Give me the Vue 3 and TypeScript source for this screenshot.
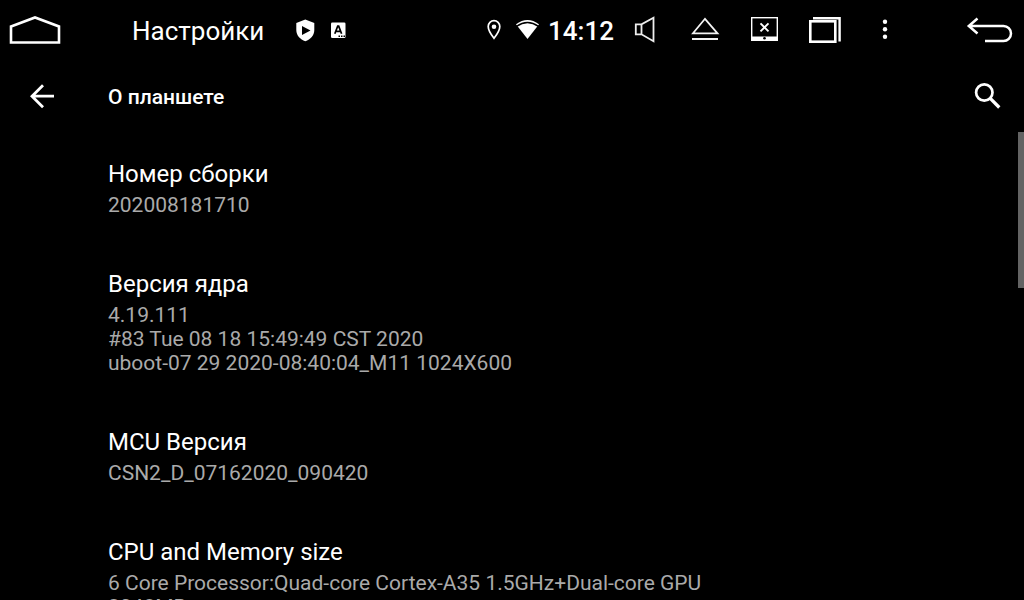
<script setup lang="ts">
interface Entry {
  title: string
  lines: string[]
}

const entries: Entry[] = [
  { title: 'Номер сборки', lines: ['202008181710'] },
  {
    title: 'Версия ядра',
    lines: ['4.19.111', '#83 Tue 08 18 15:49:49 CST 2020', 'uboot-07 29 2020-08:40:04_M11 1024X600'],
  },
  { title: 'MCU Версия', lines: ['CSN2_D_07162020_090420'] },
  {
    title: 'CPU and Memory size',
    lines: ['6 Core Processor:Quad-core Cortex-A35 1.5GHz+Dual-core GPU', '2048MB'],
  },
]
</script>

<template>
  <div class="screen">
    <header class="status">
      <button class="key" type="button" aria-label="Домой">
        <svg width="70" height="60" viewBox="0 0 70 60">
          <path d="M11 26.5 35 17.5 59 26.5V42.5H11Z" fill="none" stroke="#fff" stroke-width="2.6" />
        </svg>
      </button>
      <span class="app-name">Настройки</span>
      <span class="notices">
        <svg width="20" height="60" viewBox="295 0 20 60">
          <path d="M305.300 19.500 314.300 23V30C314.300 35.500 310.500 39.500 305.300 41.200 300.100 39.500 296.300 35.500 296.300 30V23Z" fill="#fff" />
          <path d="M302 26 310.500 30.500 302 35Z" fill="#000" />
        </svg>
        <svg width="18" height="60" viewBox="329 0 18 60">
          <rect x="331" y="22.500" width="14.500" height="15.500" rx="1.300" fill="#fff" />
          <path d="M334.800 33.800 337.700 26.200H338.700L341.600 33.800M336 31.300H340.400" fill="none" stroke="#000" stroke-width="1.700" />
          <path d="M338.500 36.200H345" stroke="#000" stroke-width="1.500" stroke-dasharray="1.500 1" />
        </svg>
      </span>
      <span class="indicators">
        <svg width="24" height="60" viewBox="482 0 24 60">
          <path d="M494 38.300C491 34.500 488.200 30.500 488.200 26.500A5.800 5.900 0 0 1 499.800 26.500C499.800 30.500 497 34.500 494 38.300Z" fill="none" stroke="#fff" stroke-width="1.700" />
          <circle cx="494" cy="26.700" r="2.300" fill="#fff" />
        </svg>
        <svg width="30" height="60" viewBox="512 0 30 60">
          <path d="M516 24.300Q527.500 15.700 539 24.300L527.500 39Z" fill="#fff" />
          <path d="M516.500 26.300Q527.500 18.700 538.500 26.300" fill="none" stroke="#000" stroke-width="1.500" />
        </svg>
        <time class="clock">14:12</time>
      </span>
      <button class="key sound" type="button" aria-label="Звук">
        <svg width="40" height="60" viewBox="625 0 40 60">
          <path d="M635.800 24.300H641.500L653.500 17.800V41.200L641.500 34.300H635.800ZM641.500 24.300V34.300" fill="none" stroke="#eee" stroke-width="1.800" />
        </svg>
      </button>
      <button class="key" type="button" aria-label="Извлечь">
        <svg width="60" height="60" viewBox="675 0 60 60">
          <path d="M693 33.300 705 18.800 717.500 33.300Z" fill="none" stroke="#f4f4f4" stroke-width="1.800" />
          <path d="M692 39H718" stroke="#f4f4f4" stroke-width="2" />
        </svg>
      </button>
      <button class="key" type="button" aria-label="Выключить экран">
        <svg width="60" height="60" viewBox="735 0 60 60">
          <rect x="751.700" y="17.700" width="25.600" height="22.600" fill="none" stroke="#fff" stroke-width="1.400" />
          <rect x="751" y="36.500" width="27" height="4.500" fill="#fff" />
          <path d="M760.500 23.300 768.500 31.300M768.500 23.300 760.500 31.300" stroke="#fff" stroke-width="1.900" />
          <circle cx="764.500" cy="38.300" r="1.300" fill="#000" />
        </svg>
      </button>
      <button class="key" type="button" aria-label="Недавние приложения">
        <svg width="60" height="60" viewBox="795 0 60 60">
          <path d="M813 18.200H839.600V41.500" fill="none" stroke="#fff" stroke-width="2.400" />
          <rect x="810.300" y="21.300" width="25" height="20.400" fill="none" stroke="#fff" stroke-width="2.600" />
        </svg>
      </button>
      <button class="key" type="button" aria-label="Меню">
        <svg width="60" height="60" viewBox="855 0 60 60" fill="#fff">
          <circle cx="885" cy="21.700" r="2.200" />
          <circle cx="885" cy="29.200" r="2.200" />
          <circle cx="885" cy="36.700" r="2.200" />
        </svg>
      </button>
      <button class="key back" type="button" aria-label="Назад">
        <svg width="64" height="60" viewBox="960 0 64 60">
          <path d="M977.500 18.500 968.800 26 977.500 33.500M969 26H1003.500A7.500 7.500 0 0 1 1003.500 41H985" fill="none" stroke="#fff" stroke-width="2.500" />
        </svg>
      </button>
    </header>

    <nav class="toolbar">
      <button class="key up" type="button" aria-label="Перейти вверх">
        <svg width="28" height="28" viewBox="28 82 28 28">
          <path d="M54 96.200H32.500M43 85.200 32 96.200 43 107.200" fill="none" stroke="#fff" stroke-width="2.800" />
        </svg>
      </button>
      <h1>О планшете</h1>
      <button class="key search" type="button" aria-label="Поиск">
        <svg width="32" height="32" viewBox="972 80 32 32">
          <circle cx="984.300" cy="92.500" r="8.200" fill="none" stroke="#fff" stroke-width="2.700" />
          <path d="M990 98.200 999.300 107.500" stroke="#fff" stroke-width="3.300" />
        </svg>
      </button>
    </nav>

    <main class="content">
      <ul class="entries">
        <li v-for="entry in entries" :key="entry.title" class="entry">
          <h2>{{ entry.title }}</h2>
          <p v-for="line in entry.lines" :key="line">{{ line }}</p>
        </li>
      </ul>
      <div class="thumb"></div>
    </main>
  </div>
</template>

<style>
body {
  background: #000;
}
</style>

<style scoped>
.screen {
  display: flex;
  flex-direction: column;
  height: 100vh;
  overflow: hidden;
  background: #000;
  color: #fff;
  font-family: Roboto, "Noto Sans", sans-serif;
}

svg {
  display: block;
  flex: none;
}

.key {
  flex: none;
  padding: 0;
  border: 0;
  background: none;
  cursor: pointer;
}

.status {
  display: flex;
  align-items: center;
  flex: none;
  height: 60px;
}

.app-name {
  margin-left: 62px;
  padding-top: 2px;
  font-size: 26px;
  line-height: 32px;
}

.notices {
  display: flex;
  gap: 14px;
  margin-left: 31px;
}

.indicators {
  display: flex;
  align-items: center;
  gap: 6px;
  margin-left: auto;
}

.clock {
  width: 77px;
  padding-top: 2px;
  font-size: 26px;
  font-weight: 500;
  line-height: 32px;
}

.sound {
  margin-right: 10px;
}

.back {
  margin-left: 45px;
}

.toolbar {
  display: flex;
  align-items: center;
  flex: none;
  height: 72px;
  padding: 0 20px 0 28px;
}

.toolbar h1 {
  flex: 1;
  margin: 2px 0 0 52px;
  font-size: 21px;
  font-weight: 500;
  line-height: 24px;
}

.content {
  display: flex;
  flex: 1;
  min-height: 0;
  overflow: hidden;
}

.entries {
  flex: 1;
  margin: 0;
  padding: 0 0 0 108px;
  list-style: none;
}

.entry {
  padding: 26px 0 25px;
}

.entry h2 {
  margin: 0 0 3px;
  font-size: 24px;
  font-weight: 400;
  line-height: 32px;
}

.entry p {
  margin: 0;
  color: #aaa;
  font-size: 21px;
  line-height: 24px;
}

.thumb {
  width: 6px;
  height: 33.333%;
  background: #636363;
}
</style>
